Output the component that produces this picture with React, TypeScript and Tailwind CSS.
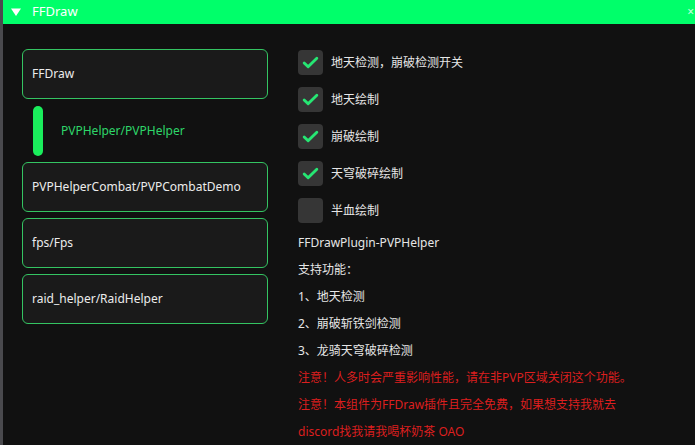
const plugins = [
  { name: "FFDraw", active: false },
  { name: "PVPHelper/PVPHelper", active: true },
  { name: "PVPHelperCombat/PVPCombatDemo", active: false },
  { name: "fps/Fps", active: false },
  { name: "raid_helper/RaidHelper", active: false },
];

const options = [
  { label: "地天检测，崩破检测开关", checked: true },
  { label: "地天绘制", checked: true },
  { label: "崩破绘制", checked: true },
  { label: "天穹破碎绘制", checked: true },
  { label: "半血绘制", checked: false },
];

const notes = [
  { text: "FFDrawPlugin-PVPHelper", warn: false },
  { text: "支持功能：", warn: false },
  { text: "1、地天检测", warn: false },
  { text: "2、崩破斩铁剑检测", warn: false },
  { text: "3、龙骑天穹破碎检测", warn: false },
  { text: "注意！人多时会严重影响性能，请在非PVP区域关闭这个功能。", warn: true },
  { text: "注意！本组件为FFDraw插件且完全免费，如果想支持我就去", warn: true },
  { text: "discord找我请我喝杯奶茶 OAO", warn: true },
];

function Check() {
  return (
    <svg viewBox="0 0 24 24" className="w-[19px] h-[19px]">
      <path
        d="M4 12.5l5 5L20 6.5"
        fill="none"
        stroke="#26e673"
        strokeWidth="3.6"
        strokeLinecap="round"
        strokeLinejoin="round"
      />
    </svg>
  );
}

export default function App() {
  return (
    <div
      className="flex w-[695px] h-[445px] overflow-hidden bg-[#4a4a4e]"
      style={{ fontFamily: '"Noto Sans", "Noto Sans CJK SC", sans-serif' }}
    >
      <div className="ml-[3px] flex flex-1 flex-col bg-[#111111]">
        {/* title bar */}
        <div className="flex h-[24px] shrink-0 items-center bg-[#00ff6a] pl-[8px] text-[13px] text-white">
          <svg viewBox="0 0 10 10" className="w-[10px] h-[10px]">
            <path d="M0 1.5h10L5 9z" fill="#ffffff" />
          </svg>
          <span className="ml-[11px]">FFDraw</span>
          <span className="ml-auto mr-[1px] text-[12px] leading-none text-[#c8ffe0]">×</span>
        </div>

        <div className="flex shrink-0 pt-[25px]">
          {/* plugin list */}
          <div className="ml-[19px] flex w-[246px] flex-col gap-[6px]">
            {plugins.map((p) =>
              p.active ? (
                <div key={p.name} className="flex h-[51px] items-center">
                  <div className="ml-[11px] h-[50px] w-[10px] rounded-full bg-[#1aee5c]" />
                  <span className="ml-[18px] text-[12px] text-[#2ed66a]">{p.name}</span>
                </div>
              ) : (
                <div
                  key={p.name}
                  className="flex h-[50px] items-center rounded-[6px] border border-[#34c462] bg-[#1a1a1a] px-[9px] text-[12px] text-[#ececec]"
                >
                  {p.name}
                </div>
              )
            )}
          </div>

          {/* detail pane */}
          <div className="ml-[30px] mt-[1px] flex flex-col">
            <div className="flex flex-col gap-[12px]">
              {options.map((o) => (
                <div key={o.label} className="flex items-center">
                  <div className="flex h-[25px] w-[25px] items-center justify-center rounded-[4px] bg-[#363636]">
                    {o.checked && <Check />}
                  </div>
                  <span className="ml-[8px] text-[12px] text-[#e6e6e6]">{o.label}</span>
                </div>
              ))}
            </div>
            <div className="mt-[11px] flex flex-col">
              {notes.map((n) => (
                <div
                  key={n.text}
                  className={`h-[27px] text-[12px] leading-[18px] ${n.warn ? "text-[#dc1f1f]" : "text-[#e6e6e6]"}`}
                >
                  {n.text}
                </div>
              ))}
            </div>
          </div>
        </div>
      </div>
    </div>
  );
}
